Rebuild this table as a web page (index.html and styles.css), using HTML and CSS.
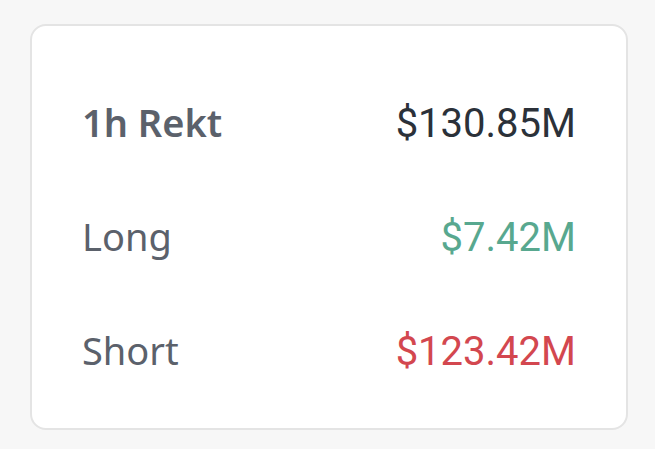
FILE: index.html
```html
<!DOCTYPE html>
<html>
<head>
<meta charset="utf-8">
<link rel="stylesheet" href="styles.css">
</head>
<body>
<div class="card">
  <div class="row">
    <span class="label strong">1h Rekt</span>
    <span class="value">$130.85M</span>
  </div>
  <div class="row">
    <span class="label">Long</span>
    <span class="value green">$7.42M</span>
  </div>
  <div class="row">
    <span class="label">Short</span>
    <span class="value red">$123.42M</span>
  </div>
</div>
</body>
</html>
```
FILE: styles.css
```css
html, body {
  margin: 0;
  padding: 0;
  background: #f7f7f7;
}
body {
  padding: 24px 27px 19px 30px;
  font-family: "Noto Sans", sans-serif;
}
.card {
  box-sizing: border-box;
  width: 598px;
  height: 406px;
  border: 2px solid #e4e4e4;
  border-radius: 16px;
  background: #fff;
  padding: 72px 50px 0 50px;
  display: flex;
  flex-direction: column;
  gap: 66px;
}
.row {
  display: flex;
  justify-content: space-between;
  align-items: baseline;
  height: 48px;
  line-height: 48px;
}
.label {
  font-family: "Noto Sans", sans-serif;
  font-size: 38px;
  color: #5b616b;
}
.strong {
  font-weight: 600;
}
.value {
  font-family: Roboto, sans-serif;
  font-size: 40px;
  color: #2b3139;
}
.green { color: #58a88f; }
.red { color: #d3474f; }
```
